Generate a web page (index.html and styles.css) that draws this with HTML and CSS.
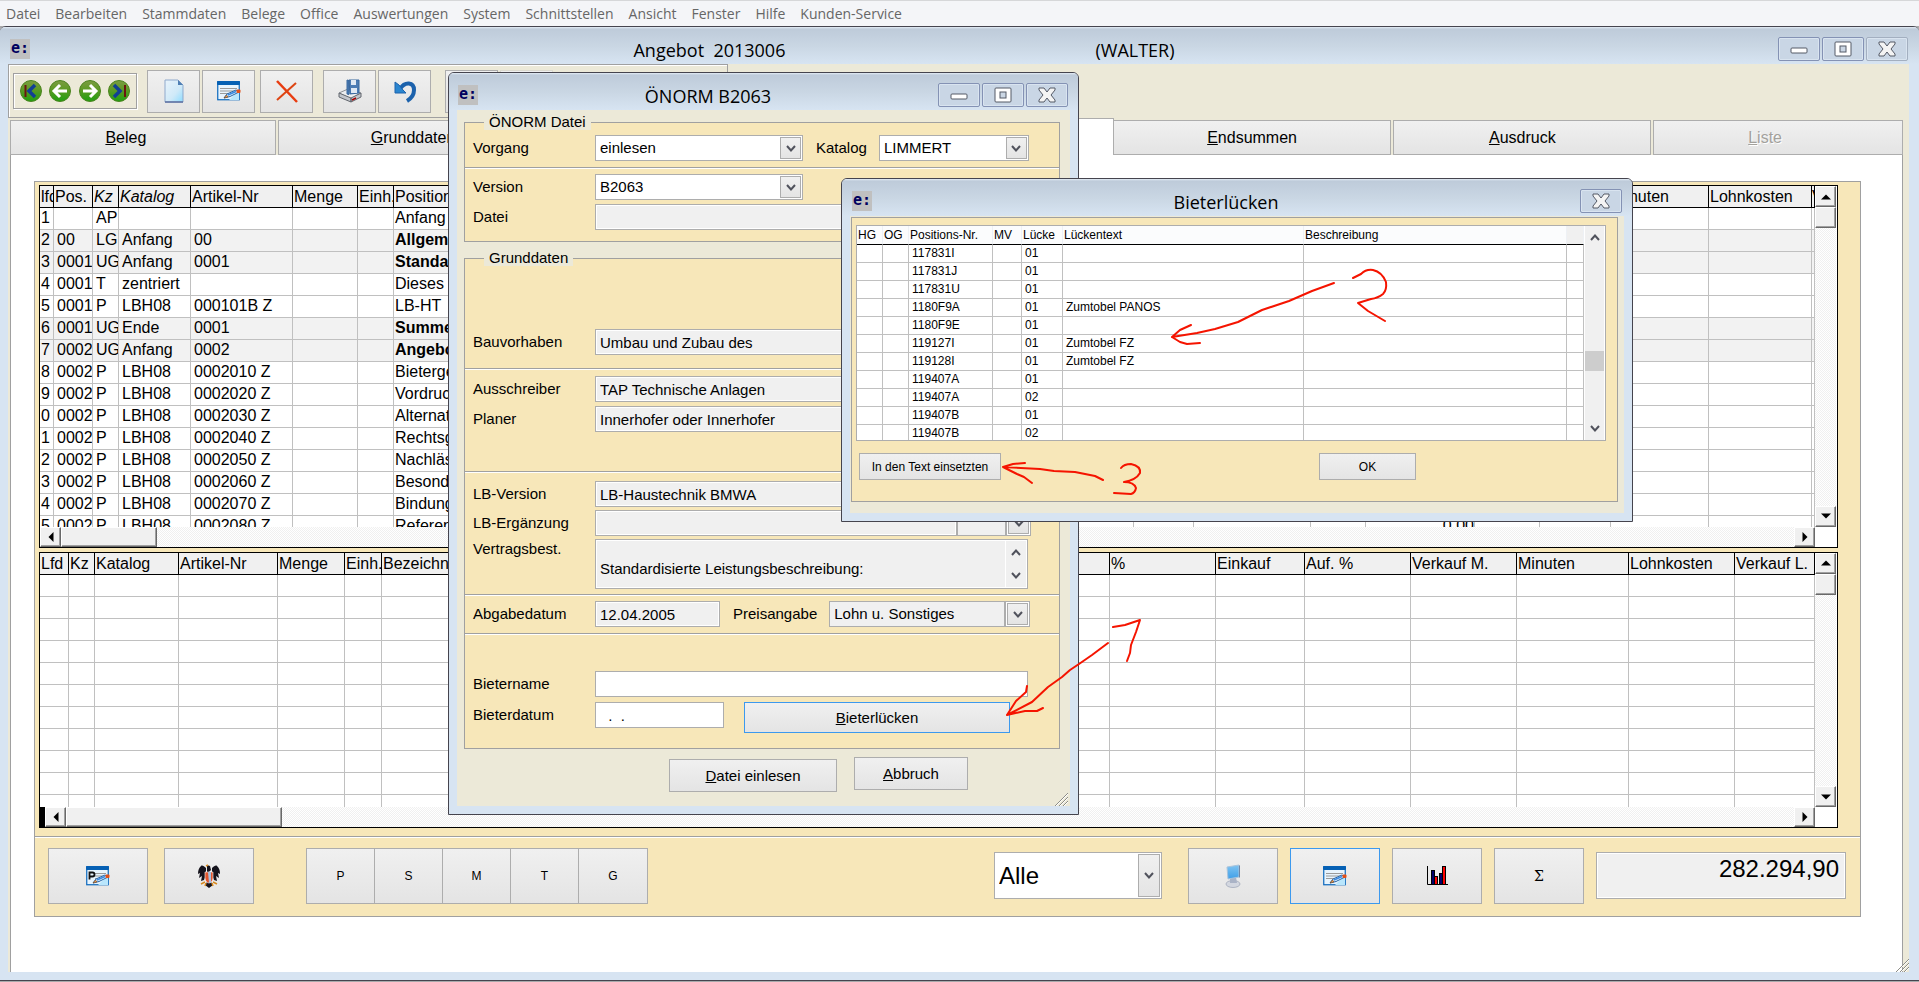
FILE: index.html
```html
<!DOCTYPE html>
<html lang="de">
<head>
<meta charset="utf-8">
<title>Angebot 2013006</title>
<link rel="stylesheet" href="styles.css">
</head>
<body>
<svg class="defs" aria-hidden="true">
  <defs>
    <linearGradient id="g-green" x1="0" y1="0" x2="0" y2="1"><stop offset="0" stop-color="#7d9c42"/><stop offset=".45" stop-color="#5c9a24"/><stop offset="1" stop-color="#1fa010"/></linearGradient>
    <linearGradient id="g-page" x1="0" y1="0" x2="1" y2="1"><stop offset="0" stop-color="#e9f3fb"/><stop offset=".6" stop-color="#cfe9f8"/><stop offset="1" stop-color="#8ddcff"/></linearGradient>
    <linearGradient id="g-blue" x1="0" y1="0" x2="0" y2="1"><stop offset="0" stop-color="#7fc4f2"/><stop offset="1" stop-color="#3f9fe8"/></linearGradient>
    <symbol id="i-min" viewBox="0 0 18 16"><rect x="1" y="7" width="16" height="5" rx="1" fill="#fff" stroke="#555a66"/></symbol>
    <symbol id="i-max" viewBox="0 0 18 16"><rect x="1" y="1" width="16" height="14" rx="1" fill="#fff" stroke="#555a66"/><rect x="6" y="5" width="6" height="6" fill="#cbd7e5" stroke="#555a66"/></symbol>
    <symbol id="i-close" viewBox="0 0 18 16"><path d="M1 1h5l3 4 3-4h5v2l-4 5 4 5v2h-5l-3-4-3 4H1v-2l4-5-4-5z" fill="#f4f4f4" stroke="#555a66"/></symbol>
    <symbol id="i-down" viewBox="0 0 10 7"><path d="M1 1l4 4.500 4-4.500" fill="none" stroke="#50525c" stroke-width="2"/></symbol>
    <symbol id="i-up" viewBox="0 0 10 7"><path d="M1 6l4-4.500 4 4.500" fill="none" stroke="#50525c" stroke-width="2"/></symbol>
    <symbol id="t-up" viewBox="0 0 10 10"><path d="M0 7.500h10l-5-5z"/></symbol>
    <symbol id="t-down" viewBox="0 0 10 10"><path d="M0 2.500h10l-5 5z"/></symbol>
    <symbol id="t-left" viewBox="0 0 10 10"><path d="M7.500 0v10l-5-5z"/></symbol>
    <symbol id="t-right" viewBox="0 0 10 10"><path d="M2.500 0v10l5-5z"/></symbol>
    <symbol id="i-form" viewBox="0 0 24 20"><rect x=".75" y=".75" width="21.500" height="18" fill="#e8f4fd" stroke="#0a68bd" stroke-width="1.200"/><path d="M12 19h10V9z" fill="#b9e6fc"/><rect x="0" y="0" width="23" height="4" rx="1" fill="#0560b4"/><path d="M3 7.500h17M3 10h15M3 12.500h9" stroke="#9a9a9a" stroke-width="1.200"/><path d="M7 17l3-4 9-4 3 2-9 4.500z" fill="#dff1ff" stroke="#2464a8"/><path d="M11 14l8-3.500" stroke="#3c8ae0" stroke-width="1.500"/><path d="M7 17l2.500-3 1.500 2z" fill="#f0a050" stroke="#6c3a10" stroke-width=".5"/><rect x="19.500" y="8.500" width="4" height="3.500" rx="1" fill="#e0501a"/></symbol>
    <symbol id="i-grip" viewBox="0 0 14 14"><path d="M1 14L14 1M5 14l9-9M9 14l5-5" stroke="#8d8d86"/><path d="M2 14L14 2M6 14l8-8M10 14l4-4" stroke="#fff"/></symbol>
  </defs>
</svg>

<nav class="menubar">
  <a href="#">Datei</a><a href="#">Bearbeiten</a><a href="#">Stammdaten</a><a href="#">Belege</a><a href="#">Office</a><a href="#">Auswertungen</a><a href="#">System</a><a href="#">Schnittstellen</a><a href="#">Ansicht</a><a href="#">Fenster</a><a href="#">Hilfe</a><a href="#">Kunden-Service</a>
</nav>

<main class="window window-main">
  <header class="titlebar">
    <span class="badge">e:</span>
    <h1 class="title title-split"><span>Angebot&nbsp; 2013006</span><span>(WALTER)</span></h1>
    <div class="winbtns">
      <button aria-label="Minimieren"><svg><use href="#i-min"/></svg></button>
      <button aria-label="Maximieren"><svg><use href="#i-max"/></svg></button>
      <button aria-label="Schließen" class="dim"><svg><use href="#i-close"/></svg></button>
    </div>
  </header>
  <div class="client">
    <div class="toolbar">
      <div class="navgroup">
        <button aria-label="Erster"><svg viewBox="0 0 22 22"><circle cx="11" cy="11" r="10.500" fill="url(#g-green)" stroke="#4c8420"/><path d="M5.500 5v12" stroke="#6b1410" stroke-width="2"/><path d="M15 5l-6 6 6 6" fill="none" stroke="#123f94" stroke-width="3.500"/></svg></button>
        <button aria-label="Zurück"><svg viewBox="0 0 22 22"><circle cx="11" cy="11" r="10.500" fill="url(#g-green)" stroke="#4c8420"/><path d="M18 11H6M11 5l-6 6 6 6" fill="none" stroke="#fff" stroke-width="3"/></svg></button>
        <button aria-label="Weiter"><svg viewBox="0 0 22 22"><circle cx="11" cy="11" r="10.500" fill="url(#g-green)" stroke="#4c8420"/><path d="M4 11h12M11 5l6 6-6 6" fill="none" stroke="#fff" stroke-width="3"/></svg></button>
        <button aria-label="Letzter"><svg viewBox="0 0 22 22"><circle cx="11" cy="11" r="10.500" fill="url(#g-green)" stroke="#4c8420"/><path d="M17 5v12" stroke="#6b1410" stroke-width="2"/><path d="M6 5l6 6-6 6" fill="none" stroke="#123f94" stroke-width="3.500"/></svg></button>
      </div>
      <div class="toolgroup">
        <button class="btn tool" aria-label="Neu"><svg class="ico" viewBox="0 0 24 24"><path d="M3 1h13l5 5v17H3z" fill="url(#g-page)" stroke="#8fa9cc"/><path d="M16 1l5 5h-5z" fill="#4f7fb4"/><path d="M3 23h18" stroke="#5d6fa0" stroke-width="1.500"/></svg></button>
        <button class="btn tool" aria-label="Bearbeiten"><svg class="ico"><use href="#i-form"/></svg></button>
      </div>
      <div class="toolgroup">
        <button class="btn tool" aria-label="Löschen"><svg class="ico" viewBox="0 0 24 24"><path d="M2 2l20 21" stroke="#e83c10" stroke-width="2.500"/><path d="M21 4L2 21" stroke="#dd4412" stroke-width="2"/></svg></button>
      </div>
      <div class="toolgroup">
        <button class="btn tool" aria-label="Speichern"><svg class="ico" viewBox="0 0 24 24"><path d="M1 14l9-4 13 4-10 6z" fill="#eceef0" stroke="#8a8f96"/><path d="M1 14l12 5v4L1 18zM13 19l10-5v4l-10 5z" fill="#c2c6cc" stroke="#63676e"/><path d="M14 21l4-2" stroke="#a00" stroke-width="1.500"/><path d="M9 1l2 .500v14l-2-.500zM11 1h10v13l-9 1z" fill="#4c7cb4" stroke="#39689e"/><rect x="13" y="1" width="5" height="5" fill="#dfe9f4"/><rect x="13" y="9" width="6" height="5" fill="#dfe9f4"/></svg></button>
        <button class="btn tool" aria-label="Rückgängig"><svg class="ico" viewBox="0 0 24 24"><path d="M7 10c5-8 14-7 14 1 0 4-2 8-7 11" fill="none" stroke="#1c62ac" stroke-width="4"/><path d="M2 3v11h11l-3-3-4-5z" fill="#2a86d0" stroke="#1c62ac"/></svg></button>
      </div>
      <div class="toolgroup">
        <button class="btn tool" aria-label="Drucken"></button>
        <button class="btn tool" aria-label="Vorschau" disabled></button>
      </div>
    </div>

    <div class="tabs" role="tablist">
      <button class="tab tab-a" role="tab"><u>B</u>eleg</button>
      <button class="tab tab-b" role="tab"><u>G</u>runddaten</button>
      <button class="tab tab-on" role="tab" aria-selected="true" aria-label="Positionen"></button>
      <button class="tab tab-c" role="tab"><u>E</u>ndsummen</button>
      <button class="tab tab-d" role="tab"><u>A</u>usdruck</button>
      <button class="tab tab-e" role="tab" disabled><u>L</u>iste</button>
    </div>

    <section class="page">
      <div class="panel">
        <div class="lists">
          <div class="pane pane-top">
            <div class="view">
              <table class="grid">
                <colgroup><col class="w14"><col class="w39"><col class="w26"><col class="w72"><col class="w102"><col class="w65"><col class="w36"><col><col class="w60"><col class="w117"><col class="w55"><col class="w109"><col class="w65"><col class="w71"><col class="w98"><col class="w103"><col class="w3"></colgroup>
                <thead><tr><th>lfd<th>Pos.<th><i>Kz</i><th><i>Katalog</i><th>Artikel-Nr<th>Menge<th>Einh.<th>Position
                  <th><th><th><th><th><th>
                  <th>Minuten<th>Lohnkosten<th>V</tr></thead>
                <tbody>
                <tr><td>1<td><td>AP<td><td><td><td><td>Anfang<td><td><td><td><td><td><td><td><td></tr>
                <tr class="alt"><td>2<td>00<td>LG<td>Anfang<td>00<td><td><td><b>Allgemein</b><td><td><td><td><td><td><td><td><td></tr>
                <tr class="alt"><td>3<td>0001<td>UG<td>Anfang<td>0001<td><td><td><b>Standard</b><td><td><td><td><td><td><td><td><td></tr>
                <tr><td>4<td>0001<td>T<td>zentriert<td><td><td><td>Dieses<td><td><td><td><td><td><td><td><td></tr>
                <tr><td>5<td>0001<td>P<td>LBH08<td>000101B Z<td><td><td>LB-HT<td><td><td><td><td><td><td><td><td></tr>
                <tr class="alt"><td>6<td>0001<td>UG<td>Ende<td>0001<td><td><td><b>Summe</b><td><td><td><td><td><td><td><td><td></tr>
                <tr class="alt"><td>7<td>0002<td>UG<td>Anfang<td>0002<td><td><td><b>Angebot</b><td><td><td><td><td><td><td><td><td></tr>
                <tr><td>8<td>0002<td>P<td>LBH08<td>0002010 Z<td><td><td>Bietergemeinschaft<td><td><td><td><td><td><td><td><td></tr>
                <tr><td>9<td>0002<td>P<td>LBH08<td>0002020 Z<td><td><td>Vordrucke<td><td><td><td><td><td><td><td><td></tr>
                <tr><td>0<td>0002<td>P<td>LBH08<td>0002030 Z<td><td><td>Alternativen<td><td><td><td><td><td><td><td><td></tr>
                <tr><td>1<td>0002<td>P<td>LBH08<td>0002040 Z<td><td><td>Rechtsgrundlage<td><td><td><td><td><td><td><td><td></tr>
                <tr><td>2<td>0002<td>P<td>LBH08<td>0002050 Z<td><td><td>Nachlässe<td><td><td><td><td><td><td><td><td></tr>
                <tr><td>3<td>0002<td>P<td>LBH08<td>0002060 Z<td><td><td>Besondere<td><td><td><td><td><td><td><td><td></tr>
                <tr><td>4<td>0002<td>P<td>LBH08<td>0002070 Z<td><td><td>Bindung<td><td><td><td><td><td><td><td><td></tr>
                <tr><td>5<td>0002<td>P<td>LBH08<td>0002080 Z<td><td><td>Referenzen<td><td><td><td class="num">0,00<td><td><td><td><td></tr>
                </tbody>
              </table>
            </div>
            <div class="vscroll"><button aria-label="Nach oben"><svg><use href="#t-up"/></svg></button><i class="thumb"></i><button class="end" aria-label="Nach unten"><svg><use href="#t-down"/></svg></button></div>
            <div class="hscroll"><button aria-label="Nach links"><svg><use href="#t-left"/></svg></button><i class="thumb"></i><button class="end" aria-label="Nach rechts"><svg><use href="#t-right"/></svg></button></div>
          </div>

          <div class="pane pane-bottom">
            <div class="view">
              <table class="grid">
                <colgroup><col class="w29"><col class="w26"><col class="w84"><col class="w99"><col class="w67"><col class="w37"><col><col class="w106"><col class="w89"><col class="w106"><col class="w106"><col class="w112"><col class="w106"><col class="w80"></colgroup>
                <thead><tr><th>Lfd<th>Kz<th>Katalog<th>Artikel-Nr<th>Menge<th>Einh.<th>Bezeichnung<th>%<th>Einkauf<th>Auf. %<th>Verkauf M.<th>Minuten<th>Lohnkosten<th>Verkauf L.</tr></thead>
                <tbody>
                <tr><td><td><td><td><td><td><td><td><td><td><td><td><td><td>
                <tr><td><td><td><td><td><td><td><td><td><td><td><td><td><td>
                <tr><td><td><td><td><td><td><td><td><td><td><td><td><td><td>
                <tr><td><td><td><td><td><td><td><td><td><td><td><td><td><td>
                <tr><td><td><td><td><td><td><td><td><td><td><td><td><td><td>
                <tr><td><td><td><td><td><td><td><td><td><td><td><td><td><td>
                <tr><td><td><td><td><td><td><td><td><td><td><td><td><td><td>
                <tr><td><td><td><td><td><td><td><td><td><td><td><td><td><td>
                <tr><td><td><td><td><td><td><td><td><td><td><td><td><td><td>
                <tr><td><td><td><td><td><td><td><td><td><td><td><td><td><td>
                <tr><td><td><td><td><td><td><td><td><td><td><td><td><td><td>
                </tbody>
              </table>
            </div>
            <div class="vscroll"><button aria-label="Nach oben"><svg><use href="#t-up"/></svg></button><i class="thumb"></i><button class="end" aria-label="Nach unten"><svg><use href="#t-down"/></svg></button></div>
            <div class="hscroll"><button aria-label="Nach links"><svg><use href="#t-left"/></svg></button><i class="thumb"></i><button class="end" aria-label="Nach rechts"><svg><use href="#t-right"/></svg></button></div>
          </div>
        </div>

        <div class="footer">
          <button class="btn foot-a" aria-label="Position bearbeiten"><svg class="ico" viewBox="0 0 24 20"><use href="#i-form"/><rect x="2" y="5" width="7" height="9" fill="#e8f4fd"/><path d="M3.500 13.500v-7h3a1.800 1.800 0 0 1 0 4h-3" fill="none" stroke="#111" stroke-width="1.800"/></svg></button>
          <button class="btn foot-b" aria-label="Önorm"><svg class="ico" viewBox="0 0 24 24"><path d="M10 1l3 1 1 4-2 2h-2zM9 4C7 2 5 1 4 2 2 4 1 6 1 10l2-1-1 5 3-2-1 5 3-1 2-5zM15 4c2-2 4-3 5-2 2 2 3 4 3 8l-2-1 1 5-3-2 1 5-3-1-2-5zM10 18h4l2 3-4 3-4-3z" fill="#15131c"/><path d="M8 8h8v6c0 3-2 5-4 5s-4-2-4-5z" fill="#e2552c" stroke="#fff" stroke-width=".6"/><path d="M11 8h3v11h-2z" fill="#a8c0dc"/><path d="M4 20l4-2M20 20l-4-2M8 22l1-3M16 22l-1-3M11 1l-2 1" stroke="#d88a20" stroke-width="1.500"/></svg></button>
          <div class="segment">
            <button class="btn">P</button><button class="btn">S</button><button class="btn">M</button><button class="btn">T</button><button class="btn">G</button>
          </div>
          <div class="combo combo-big"><select aria-label="Filter"><option>Alle</option></select><span class="drop"><svg><use href="#i-down"/></svg></span></div>
          <div class="footbtns">
            <button class="btn" aria-label="Ansicht"><svg class="ico" viewBox="0 0 24 24"><ellipse cx="12" cy="20" rx="7" ry="3.500" fill="#d3d7e0" stroke="#9aa2b4" stroke-width=".7"/><path d="M9 13h6l1 6H9z" fill="#aab3c6"/><path d="M6 3l12-2v12l-11 2z" fill="url(#g-blue)" stroke="#a9c4dc"/><path d="M18 1l1 1v11l-1 1z" fill="#6f86a6"/></svg></button>
            <button class="btn focus" aria-label="Formular"><svg class="ico"><use href="#i-form"/></svg></button>
            <button class="btn" aria-label="Diagramm"><svg class="ico" viewBox="0 0 24 20"><path d="M2.500 0v18.500H23" fill="none" stroke="#000"/><g stroke="#000"><rect x="6.500" y="4.500" width="3" height="14" fill="#00006a"/><rect x="9.500" y="10.500" width="3" height="8" fill="#f00"/><rect x="14.500" y="7.500" width="3" height="11" fill="#00006a"/><rect x="17.500" y=".5" width="3" height="18" fill="#f00"/></g></svg></button>
            <button class="btn sigma">Σ</button>
          </div>
          <input class="total" aria-label="Summe" value="282.294,90" readonly>
        </div>
      </div>
    </section>
  </div>
  <svg class="grip"><use href="#i-grip"/></svg>
</main>

<section class="window dialog dlg-norm" role="dialog" aria-labelledby="t-norm">
  <header class="titlebar">
    <span class="badge">e:</span>
    <h2 class="title" id="t-norm">ÖNORM B2063</h2>
    <div class="winbtns">
      <button aria-label="Minimieren"><svg><use href="#i-min"/></svg></button>
      <button aria-label="Maximieren"><svg><use href="#i-max"/></svg></button>
      <button aria-label="Schließen"><svg><use href="#i-close"/></svg></button>
    </div>
  </header>
  <form class="client form">
    <fieldset class="group">
      <legend>ÖNORM Datei</legend>
      <div class="block">
        <div class="row"><label for="vorgang">Vorgang</label><div class="combo c208"><select id="vorgang"><option>einlesen</option></select><span class="drop"><svg><use href="#i-down"/></svg></span></div><label class="mid" for="katalog">Katalog</label><div class="combo c150"><select id="katalog"><option>LIMMERT</option></select><span class="drop"><svg><use href="#i-down"/></svg></span></div></div>
      </div>
      <div class="block last-a">
        <div class="row"><label for="version">Version</label><div class="combo c208"><select id="version"><option>B2063</option></select><span class="drop"><svg><use href="#i-down"/></svg></span></div></div>
        <div class="row"><label for="datei">Datei</label><input id="datei" class="wide" readonly></div>
      </div>
    </fieldset>
    <fieldset class="group group-b">
      <legend>Grunddaten</legend>
      <div class="block b-bau"><div class="row"><label for="bau">Bauvorhaben</label><input id="bau" class="wide" value="Umbau und Zubau des" readonly></div></div>
      <div class="block b-aus">
        <div class="row"><label for="aus">Ausschreiber</label><input id="aus" class="wide" value="TAP Technische Anlagen" readonly></div>
        <div class="row"><label for="plan">Planer</label><input id="plan" class="wide" value="Innerhofer oder Innerhofer" readonly></div>
      </div>
      <div class="block b-lb">
        <div class="row"><label for="lbv">LB-Version</label><input id="lbv" class="wide" value="LB-Haustechnik BMWA" readonly></div>
        <div class="row"><label for="lbe">LB-Ergänzung</label><input id="lbe" class="w362" readonly><div class="combo gray c74"><select aria-label="Ergänzung"><option></option></select><span class="drop"><svg><use href="#i-down"/></svg></span></div></div>
        <div class="row row-top"><label for="vert">Vertragsbest.</label><div class="memo wide"><textarea id="vert" readonly>

Standardisierte Leistungsbeschreibung:</textarea><span class="spin"><svg><use href="#i-up"/></svg><svg><use href="#i-down"/></svg></span></div></div>
      </div>
      <div class="block b-abg"><div class="row"><label for="abg">Abgabedatum</label><input id="abg" class="w125" value="12.04.2005" readonly><label class="mid" for="preis">Preisangabe</label><div class="combo gray c201"><select id="preis"><option>Lohn u. Sonstiges</option></select><span class="drop"><svg><use href="#i-down"/></svg></span></div></div></div>
      <div class="block b-bie">
        <div class="row"><label for="bn">Bietername</label><input id="bn" class="wide"></div>
        <div class="row row-top"><label class="low" for="bd">Bieterdatum</label><input id="bd" class="w129" value="&nbsp; .&nbsp; ."><button type="button" class="btn focus b-luecken"><span><u>B</u>ieterlücken</span></button></div>
      </div>
    </fieldset>
    <div class="actions"><button type="button" class="btn a-read"><span><u>D</u>atei einlesen</span></button><button type="button" class="btn a-stop"><span><u>A</u>bbruch</span></button></div>
  </form>
  <svg class="grip"><use href="#i-grip"/></svg>
</section>

<section class="window dialog dlg-gap" role="dialog" aria-labelledby="t-gap">
  <header class="titlebar">
    <span class="badge">e:</span>
    <h2 class="title" id="t-gap">Bieterlücken</h2>
    <div class="winbtns"><button aria-label="Schließen"><svg><use href="#i-close"/></svg></button></div>
  </header>
  <div class="client gapclient">
    <div class="gappanel">
      <div class="gaplist">
        <div class="view">
          <table class="grid small">
            <colgroup><col class="w26"><col class="w26"><col class="w84"><col class="w29"><col class="w41"><col class="w241"><col class="w263"><col></colgroup>
            <thead><tr><th>HG<th>OG<th>Positions-Nr.<th>MV<th>Lücke<th>Lückentext<th>Beschreibung<th class="rest"></tr></thead>
            <tbody>
            <tr><td><td><td>117831I<td><td>01<td><td><td>
            <tr><td><td><td>117831J<td><td>01<td><td><td>
            <tr><td><td><td>117831U<td><td>01<td><td><td>
            <tr><td><td><td>1180F9A<td><td>01<td>Zumtobel PANOS<td><td>
            <tr><td><td><td>1180F9E<td><td>01<td><td><td>
            <tr><td><td><td>119127I<td><td>01<td>Zumtobel FZ<td><td>
            <tr><td><td><td>119128I<td><td>01<td>Zumtobel FZ<td><td>
            <tr><td><td><td>119407A<td><td>01<td><td><td>
            <tr><td><td><td>119407A<td><td>02<td><td><td>
            <tr><td><td><td>119407B<td><td>01<td><td><td>
            <tr><td><td><td>119407B<td><td>02<td><td><td>
            </tbody>
          </table>
        </div>
        <div class="slim"><svg><use href="#i-up"/></svg><i class="slimthumb"></i><svg><use href="#i-down"/></svg></div>
      </div>
      <div class="gapbtns"><button class="btn g-insert">In den Text einsetzten</button><button class="btn g-ok">OK</button></div>
    </div>
  </div>
</section>

<svg class="marks" viewBox="0 0 1919 982" aria-hidden="true">
  <path d="M1334 283L1312 291 1289 301 1262 310 1238 322 1215 329 1197 333 1172 337M1191 325L1180 330 1172 337 1180 342 1187 344 1200 343"/>
  <path d="M1353 278L1361 274Q1366 269 1373 270 1382 272 1386 282 1387 290 1383 294 1378 298 1371 299L1358 303 1368 311 1385 321"/>
  <path d="M1103 480L1095 476 1075 472 1054 471 1040 469 1003 467M1025 463L1013 464 1003 467 1017 474 1024 477 1032 483"/>
  <path d="M1121 468Q1124 464 1131 464 1141 466 1140 473 1136 480 1124 482 1134 482 1136 488 1135 493 1131 494L1114 493"/>
  <path d="M1113 627L1125 625 1140 620 1136 632 1131 645 1130 653 1127 661"/>
  <path d="M1108 643L1092 655 1079 664 1070 670 1062 677 1048 687 1032 702 1007 715M1027 686L1026 692 1016 701 1007 715 1025 711 1037 711 1043 708"/>
</svg>
</body>
</html>
```

FILE: styles.css
```css
* { box-sizing: border-box; }
html, body { height: 100%; }
body {
  margin: 0;
  display: flex;
  flex-direction: column;
  position: relative;
  overflow: hidden;
  background: #a9a9ab;
  color: #000;
  font: 16px/20px "Liberation Sans", Arial, sans-serif;
}
button, input, select, textarea { font: inherit; color: inherit; margin: 0; border-radius: 0; }
button { padding: 0; }
.defs { position: absolute; width: 0; height: 0; }

/* menu */
.menubar {
  display: flex;
  gap: 15px;
  height: 26px;
  padding-left: 6px;
  border-top: 1px solid #d6d7d9;
  background: #f4f5f8;
  font: 14px/25px "Open Sans", "Noto Sans", sans-serif;
}
.menubar a { color: #666; text-decoration: none; }

/* windows */
.window {
  display: flex;
  flex-direction: column;
  background: #d7e4f2;
  border: 1px solid #45444e;
  border-radius: 6px 6px 0 0;
}
.window-main { flex: 1; position: relative; min-height: 0; margin-bottom: 1px; padding-bottom: 8px; border-width: 1px 0; }
.titlebar {
  display: flex;
  align-items: flex-start;
  height: 37px;
  padding: 10px 10px 0 9px;
  border-radius: 5px 5px 0 0;
  background: linear-gradient(#e4edf6, #becbda 2px, #c9d6e3 50%, #d7e4f2);
}
.window-main > .titlebar { padding-right: 11px; padding-left: 10px; }
.badge {
  width: 20px;
  height: 20px;
  margin-top: 2px;
  background: #c0c0c0;
  color: #00005e;
  font: bold 15px/18px "DejaVu Sans Mono", monospace;
  text-align: center;
}
.title {
  flex: 1;
  margin: 0;
  text-align: center;
  font: 18px/26px "Open Sans", "Noto Sans", sans-serif;
}
.title-split { display: flex; justify-content: center; gap: 310px; }
.winbtns { display: flex; gap: 2px; }
.winbtns button {
  display: grid;
  place-items: center;
  width: 42px;
  height: 24px;
  border: 1px solid #8492b4;
  border-radius: 2px;
  background: #c9d6e5;
  box-shadow: inset 0 0 0 1px #d9e4f0;
}
.winbtns .dim { border-color: #a3afc0; }
.winbtns svg { width: 18px; height: 16px; }
.client { background: #ece9d8; }
.window-main > .client { flex: 1; min-height: 0; display: flex; flex-direction: column; margin: 0 10px 0 8px; padding-right: 6px; }
.grip { position: absolute; right: 10px; bottom: 8px; width: 14px; height: 14px; }

/* buttons */
.btn {
  display: grid;
  place-items: center;
  place-content: center;
  border: 1px solid #adadad;
  background: linear-gradient(#f0f0f0, #e4e4e4);
}
.btn.focus { border-color: #3c99ee; }
.ico { width: 24px; height: 24px; display: block; }

/* toolbar */
.toolbar {
  display: flex;
  align-items: center;
  gap: 7px;
  width: 720px;
  height: 54px;
  padding-left: 4px;
  border: 1px solid #a0a0a0;
  box-shadow: inset 1px 1px #fff;
}
.navgroup {
  display: flex;
  justify-content: space-around;
  align-items: center;
  width: 124px;
  height: 36px;
  margin-right: 3px;
  padding: 0 2px;
  border: 1px solid #a0a0a0;
  box-shadow: 1px 1px #fff, inset 1px 1px #fff;
}
.navgroup button { width: 22px; height: 22px; border: 0; background: none; }
.navgroup svg { display: block; width: 22px; height: 22px; }
.toolgroup { display: flex; gap: 2px; }
.toolgroup + .toolgroup { margin-left: -2px; }
.toolgroup:nth-child(4) { margin-left: 3px; }
.toolgroup:nth-child(5) { margin-left: 7px; }
.tool { width: 53px; height: 43px; }
.tool:disabled { border-color: #dcdad0; }

/* tabs */
.tabs { display: flex; align-items: flex-end; height: 37px; padding-left: 2px; }
.tab {
  flex: 265 1 0;
  min-width: 0;
  height: 35px;
  border: 1px solid #adadad;
  background: linear-gradient(#f0f0f0, #e4e4e4);
}
.tab-a { text-indent: -34px; margin-right: 2px; }
.tab-b { flex-grow: 276; text-indent: -6px; }
.tab-on { flex-grow: 561; height: 37px; border-bottom: 0; border-left: 0; background: #fff; }
.tab-c { flex-grow: 278; margin-right: 2px; border-left: 0; }
.tab-d { flex-grow: 257; margin-right: 2px; }
.tab-e { flex-grow: 249; text-indent: -26px; }
.tab:disabled { color: #a3a19c; text-shadow: 1px 1px #fff; }

/* page */
.page {
  flex: 1;
  min-height: 0;
  display: flex;
  margin-left: 2px;
  padding: 26px 41px 55px 23px;
  border: solid #a0a0a0;
  border-width: 0 1px;
  background: #fff;
}
.panel { flex: 1; min-width: 0; display: flex; flex-direction: column; border: 1px solid #a0a0a0; background: #f7e7b9; }
.lists { flex: 1; min-height: 0; display: flex; flex-direction: column; gap: 4px; padding: 3px 22px 8px 4px; }
.pane {
  display: grid;
  grid-template: minmax(0, 1fr) 20px / minmax(0, 1fr) 22px;
  border: 1px solid #000;
  min-height: 0;
  background: #fff;
}
.pane-top { flex: 363 1 0; }
.pane-bottom { flex: 276 1 0; }
.view { overflow: hidden; min-height: 0; background: #fff; }

.grid { width: 100%; table-layout: fixed; border-spacing: 0; }
.grid tr { height: 22px; }
.grid th, .grid td {
  padding: 0 0 1px 3px;
  overflow: hidden;
  white-space: nowrap;
  text-align: left;
  font-weight: normal;
  line-height: 20px;
  height: 22px;
  border-right: 1px solid #c0c0c0;
  border-bottom: 1px solid #c0c0c0;
}
.grid th { padding: 1px 0 0 1px; background: #f0f0f0; border-color: #000; }
.grid td:first-child, .grid th:first-child { padding-left: 1px; }
.pane-top td:nth-child(8) { padding-left: 1px; }
.pane-top td:last-child, .pane-top th:last-child { padding-left: 0; }
.grid .alt td { background: #f2f2f2; }
.grid .num { text-align: right; }
.grid.small tr { height: 18px; }
.grid.small th, .grid.small td { height: 18px; padding-top: 0; font-size: 12px; line-height: 16px; }
.grid.small th { height: 19px; background: #fbfcfd; border-right-color: #eef1f5; padding-left: 1px; }
.grid.small .rest { background: #f0f0f0; }
.w3 { width: 3px; } .w14 { width: 14px; } .w26 { width: 26px; } .w29 { width: 29px; }
.w36 { width: 36px; } .w37 { width: 37px; } .w39 { width: 39px; } .w41 { width: 41px; }
.w55 { width: 55px; } .w60 { width: 60px; } .w65 { width: 65px; } .w67 { width: 67px; }
.w71 { width: 71px; } .w72 { width: 72px; } .w80 { width: 80px; } .w84 { width: 84px; }
.w89 { width: 89px; } .w98 { width: 98px; } .w99 { width: 99px; } .w102 { width: 102px; }
.w103 { width: 103px; } .w106 { width: 106px; } .w109 { width: 109px; } .w112 { width: 112px; }
.w117 { width: 117px; } .w241 { width: 241px; } .w263 { width: 263px; }

/* classic scroll bars */
.vscroll, .hscroll { display: flex; background: repeating-conic-gradient(#f0f0f0 0 25%, #fff 0 50%) 0 0 / 2px 2px; }
.vscroll { flex-direction: column; margin-right: 1px; }
.vscroll button, .hscroll button, .thumb {
  display: grid;
  place-items: center;
  width: 21px;
  height: 21px;
  background: #f0f0f0;
  border: 1px solid;
  border-color: #fff #696969 #696969 #fff;
  box-shadow: inset -1px -1px #a0a0a0;
}
.hscroll button, .hscroll .thumb { height: 20px; }
.vscroll svg, .hscroll svg { width: 10px; height: 10px; }
.vscroll .end { margin-top: auto; }
.hscroll .end { margin-left: auto; }
.hscroll .thumb { width: 96px; }
.pane-bottom .hscroll { border-left: 5px solid #000; }
.pane-bottom .hscroll .thumb { width: 216px; }

/* footer */
.footer {
  display: flex;
  align-items: center;
  height: 80px;
  padding: 0 14px 2px 13px;
  border-top: 1px solid #a0a0a0;
  box-shadow: inset 0 1px #fff;
  font-size: 12px;
}
.footer .btn { width: 90px; height: 56px; }
.footer .foot-a { width: 100px; }
.footer .foot-b { margin-left: 16px; }
.segment { display: flex; margin: 0 auto 0 52px; }
.footer .segment .btn { width: 68px; border-right-width: 0; }
.footer .segment .btn:last-child { width: 70px; border-right-width: 1px; }
.footer .combo-big { width: 168px; height: 47px; margin-right: 26px; font-size: 24px; }
.combo-big select { padding-bottom: 3px; }
.combo-big .drop { width: 22px; }
.footbtns { display: flex; gap: 12px; margin-right: 12px; }
.sigma { font: 14px "DejaVu Serif", serif; }
.total {
  width: 250px;
  height: 47px;
  padding: 0 6px 13px;
  border: 1px solid #adadad;
  box-shadow: inset 0 0 0 1px #fff;
  background: #f0f0f0;
  font-size: 24px;
  text-align: right;
}

/* combos */
.combo { position: relative; height: 26px; }
.combo select {
  appearance: none;
  width: 100%;
  height: 100%;
  padding: 0 24px 0 4px;
  border: 1px solid #adadad;
  background: #fff;
}
.combo.gray select { background: #f0f0f0; }
.drop {
  position: absolute;
  top: 2px;
  right: 2px;
  bottom: 2px;
  width: 21px;
  display: grid;
  place-items: center;
  border: 1px solid #adadad;
  background: linear-gradient(#f0f0f0, #e4e4e4);
  pointer-events: none;
}
.drop svg, .spin svg, .slim svg { width: 10px; height: 7px; }
.gray .drop { box-shadow: 0 0 0 1px #fff, -2px 0 0 1px #adadad; }

/* dialogs */
.dialog { position: absolute; }
.dlg-norm { left: 448px; top: 72px; width: 631px; padding-bottom: 8px; font-size: 15px; }
.dlg-norm .client { margin: 0 8px; }
.form { padding: 4px 10px 14px 7px; }
.group { min-width: 0; margin: 0; padding: 0; border: 1px solid #a0a0a0; background: #f7e7b9; }
.group-b { margin-top: 8px; }
.group legend { margin-left: 19px; padding: 0 5px; background: #ece9d8; line-height: 16px; }
.block { display: flex; flex-direction: column; gap: 4px; padding: 5px 0 6px 8px; }
.block + .block { border-top: 1px solid #a0a0a0; box-shadow: inset 0 1px #fff; padding-top: 6px; }
.block.last-a { padding-bottom: 11px; }
.block.b-bau { padding-top: 63px; padding-bottom: 13px; }
.block.b-aus { padding-top: 7px; padding-bottom: 39px; }
.block.b-lb { gap: 3px; padding-top: 9px; padding-bottom: 5px; }
.block.b-abg { padding-top: 6px; }
.block.b-bie { gap: 5px; padding-top: 37px; padding-bottom: 15px; }
.row { display: flex; align-items: center; }
.row-top { align-items: flex-start; }
.row label { width: 122px; }
.row .mid { width: auto; margin: 0 12px 0 13px; }
.row .low { padding-top: 3px; }
.row input, .memo { height: 26px; padding: 0 4px; border: 1px solid #adadad; box-shadow: inset 0 0 0 1px #fff; background: #fff; }
.row input:read-only, .memo { background: #f0f0f0; }
.row .wide { width: 433px; }
.row .w362 { width: 362px; }
.row .w125 { width: 125px; }
.row .w129 { width: 129px; }
.c208 { width: 208px; }
.c150 { width: 150px; }
.c74 { width: 74px; }
.c201 { width: 201px; }
.row .memo { display: flex; height: 50px; padding: 0; }
.memo textarea { flex: 1; resize: none; overflow: hidden; border: 0; padding: 0 0 0 4px; background: none; line-height: 19px; white-space: pre; }
.spin { display: flex; flex-direction: column; justify-content: space-between; width: 22px; padding: 9px 5px; border-left: 1px solid #fff; }
.b-luecken { width: 266px; height: 31px; margin-left: 20px; }
.actions { display: flex; align-items: flex-start; gap: 17px; margin-top: 8px; padding-left: 205px; }
.a-read { width: 168px; height: 33px; margin-top: 2px; }
.a-stop { width: 114px; height: 33px; }

.dlg-gap { left: 841px; top: 178px; width: 792px; padding-bottom: 8px; font-size: 12px; }
.dlg-gap .titlebar { padding-left: 10px; }
.gapclient { margin: 0 8px; padding: 1px 6px 11px 1px; }
.gappanel { padding: 7px 11px 21px 4px; border: 1px solid #a0a0a0; background: #f7e7b9; }
.gaplist { display: flex; height: 216px; border: 1px solid #adadad; background: #fff; }
.gaplist .view { flex: 1; min-width: 0; }
.slim { display: flex; flex-direction: column; align-items: center; width: 21px; padding: 8px 0; background: #f0f0f0; border-left: 1px solid #fff; border-right: 1px solid #fff; }
.slimthumb { width: 19px; height: 20px; margin: auto 0 54px; background: #cdcdcd; }
.gapbtns { display: flex; justify-content: space-between; padding: 12px 190px 0 3px; }
.g-insert { width: 142px; height: 27px; }
.g-ok { width: 97px; height: 27px; }

/* hand-drawn marks */
.marks { position: absolute; left: 0; top: 0; width: 100%; height: 100%; pointer-events: none; }
.marks path { fill: none; stroke: #f51400; stroke-width: 2; stroke-linecap: round; stroke-linejoin: round; }
```
